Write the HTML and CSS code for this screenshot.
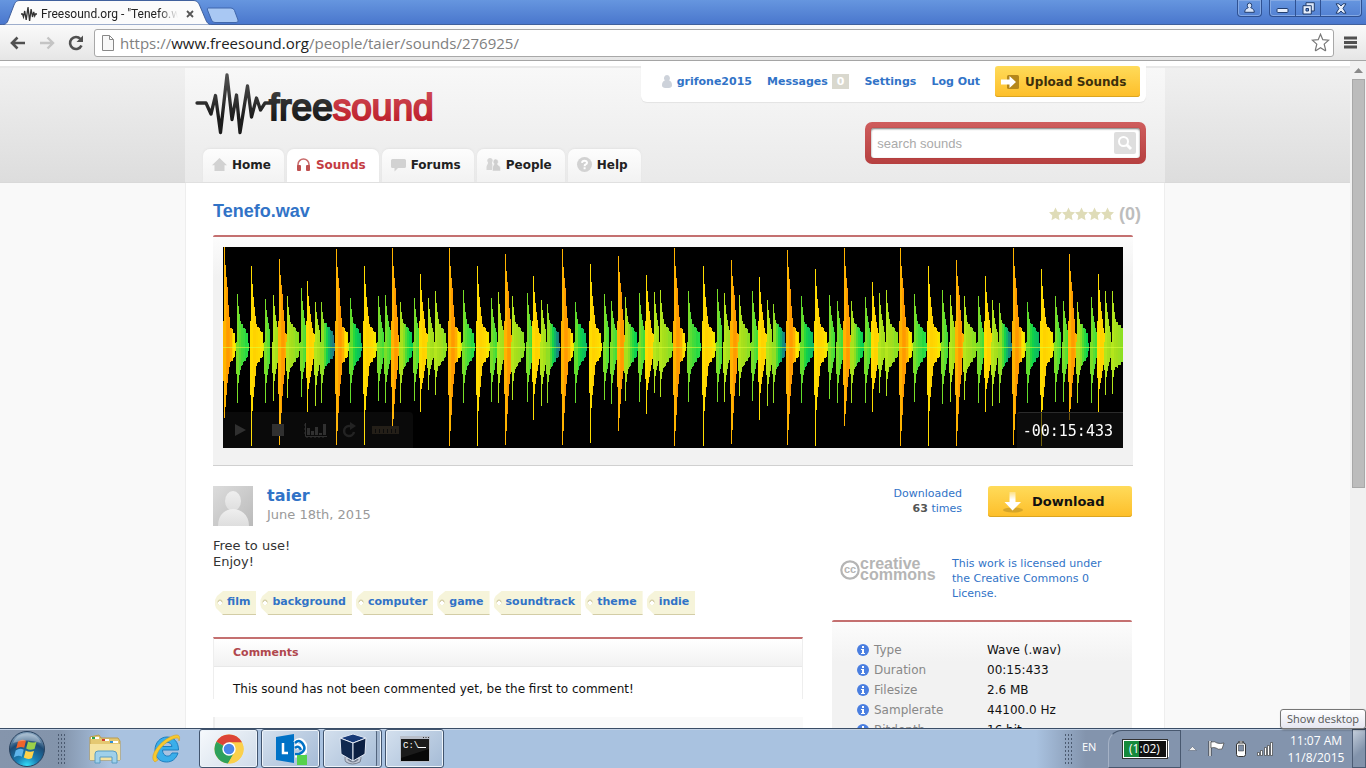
FILE: index.html
```html
<!DOCTYPE html>
<html lang="en">
<head>
<meta charset="utf-8">
<title>Freesound.org - "Tenefo.wav" by taier</title>
<link rel="stylesheet" href="styles.css">
</head>
<body>
<div class="desktop">

  <div class="titlebar">
    <div class="tab-strip">
      <div class="browser-tab">
        <svg class="tab-shape" viewBox="0 0 214 25" preserveAspectRatio="none" aria-hidden="true"><path d="M0 25C7 25 7.500 22 9 18L14 5C15.500 1.500 17 .5 20 .5H193C196 .5 198 1.500 199.500 5L205 18C207 23 208 25 214 25Z" fill="#fbfbfb" stroke="#40609c"/></svg>
        <svg class="tab-icon" width="16" height="16" viewBox="0 0 16 16" aria-hidden="true"><path d="M0 8h1.500l1 3 1.200-6 1.500 9L7 1l1.600 14 1.500-12 1.400 8 1.200-5 1 4 .8-2H16" fill="none" stroke="#333" stroke-width="1.300"/></svg>
        <span class="tab-title">Freesound.org - "Tenefo.wav"</span>
        <button class="tab-close" aria-label="Close tab"><svg width="8" height="8" viewBox="0 0 8 8"><path d="M1 1l6 6M7 1L1 7" stroke="#555" stroke-width="1.800"/></svg></button>
      </div>
      <button class="new-tab" aria-label="New tab"><svg width="33" height="17" viewBox="0 0 33 17"><path d="M2 1H25Q27.500 1 28.500 3.500L32 13Q33 15.500 30 15.500H9Q6.500 15.500 5.500 13L1.500 3Q1 1 2 1Z" fill="#a9c8f3" stroke="#4067ac"/></svg></button>
    </div>
    <div class="window-buttons">
      <button class="profile" aria-label="Profile"><svg width="11" height="12" viewBox="0 0 11 12"><path d="M5.500 1a2.300 2.300 0 0 1 2.200 2.500c0 1-.4 1.800-1 2.200C9 6.500 10.300 8 10.300 10.300H.7C.7 8 2 6.500 4.300 5.700c-.6-.4-1-1.200-1-2.200A2.300 2.300 0 0 1 5.500 1z" fill="#dbe6f8" stroke="#223e6e"/></svg></button>
      <div class="window-group">
        <button aria-label="Minimize"><svg width="13" height="12" viewBox="0 0 13 12"><rect x="1" y="6.500" width="11" height="4" rx="1" fill="#e6eefb" stroke="#223e6e"/></svg></button>
        <button aria-label="Restore"><svg width="13" height="13" viewBox="0 0 13 13"><path d="M4 .7h8.300V9H4z" fill="#dbe6f8" stroke="#223e6e"/><path d="M1 3.700h8.300V12H1z" fill="#e6eefb" stroke="#223e6e"/><path d="M4 6.500h2.500V9H4z" fill="#5d8ad4" stroke="#223e6e"/></svg></button>
        <button class="wide" aria-label="Close"><svg width="12" height="11" viewBox="0 0 12 11"><path d="M1 .8h3L6 3 8 .8h3L8 5.400l3 4.800H8L6 8l-2 2.200H1l3-4.800z" fill="#e6eefb" stroke="#223e6e"/></svg></button>
      </div>
    </div>
  </div>

  <div class="toolbar">
    <button aria-label="Back"><svg width="16" height="14" viewBox="0 0 16 14"><path d="M15 7H2M7.500 1.500L2 7l5.500 5.500" fill="none" stroke="#505050" stroke-width="2.600"/></svg></button>
    <button aria-label="Forward"><svg width="16" height="14" viewBox="0 0 16 14"><path d="M1 7h13M8.500 1.500L14 7l-5.500 5.500" fill="none" stroke="#c4c4c4" stroke-width="2.400"/></svg></button>
    <button aria-label="Reload"><svg width="16" height="16" viewBox="0 0 16 16"><path d="M12.500 4A6 6 0 1 0 13.500 10.500" fill="none" stroke="#505050" stroke-width="2.600"/><path d="M15 .5V7H8.500z" fill="#505050"/></svg></button>
    <form class="omnibox">
      <svg width="12" height="16" viewBox="0 0 12 16" aria-hidden="true"><path d="M.5.500h7l4 4v11H.5zM7.500.5v4h4" fill="#f8f8f8" stroke="#888"/></svg>
      <a class="address" href="#">https://<b>www.freesound.org</b>/people/taier/sounds/276925/</a>
      <button type="button" aria-label="Bookmark"><svg width="19" height="19" viewBox="0 0 19 19"><path d="M9.500 1.200l2.300 5.500 5.900.5-4.500 3.900 1.400 5.800c.1.700-.2.900-.7.600L9.500 14.700l-4.400 2.800c-.5.300-.8.100-.7-.6l1.400-5.800L1.300 7.200l5.900-.5z" fill="#fff" stroke="#777" stroke-width="1.200"/></svg></button>
    </form>
    <button aria-label="Menu"><svg width="13" height="13" viewBox="0 0 13 13"><path d="M0 2h13M0 6.500h13M0 11h13" stroke="#505050" stroke-width="2.800"/></svg></button>
  </div>

  <div class="viewport">
    <div class="page">
      <header class="page-head">
        <div class="wrap head-inner">
          <div class="head-left">
            <a class="logo" href="#" aria-label="freesound">
              <svg width="242" height="64" viewBox="0 0 242 64">
                <defs>
                  <linearGradient id="ink" x1="0" y1="0" x2="0" y2="64" gradientUnits="userSpaceOnUse"><stop offset="0" stop-color="#555"/><stop offset=".7" stop-color="#1c1c1c"/></linearGradient>
                  <linearGradient id="red" x1="0" y1="18" x2="0" y2="50" gradientUnits="userSpaceOnUse"><stop offset="0" stop-color="#cf4a55"/><stop offset="1" stop-color="#bd1f2b"/></linearGradient>
                </defs>
                <path d="M2 31H11L16 42L20.500 23.500L25.500 60.500L32 3L37 47.500L41.500 23L45 60.500L52.500 14L56.500 45L61.500 26L65.500 38L70 31H80" fill="none" stroke="url(#ink)" stroke-width="3.300" stroke-linejoin="round" stroke-linecap="round"/>
                <text class="logo-text" x="74" y="48"><tspan fill="url(#ink)" stroke="url(#ink)">free</tspan><tspan fill="url(#red)" stroke="url(#red)">sound</tspan></text>
              </svg>
            </a>
            <nav class="tabs">
              <a href="#"><svg width="15" height="15" viewBox="0 0 15 15"><path d="M7.500 1L15 8.300H12.500V14H2.500V8.300H0z" fill="#d2d2d2"/></svg>Home</a>
              <a class="active" href="#"><svg width="15" height="15" viewBox="0 0 15 15"><path d="M2 12V7.500a5.500 5.500 0 0 1 11 0V12" fill="none" stroke="#c86a6a" stroke-width="1.500"/><rect x="1" y="8" width="4" height="6" rx="1" fill="#bf5050"/><rect x="10" y="8" width="4" height="6" rx="1" fill="#bf5050"/></svg>Sounds</a>
              <a href="#"><svg width="15" height="15" viewBox="0 0 15 15"><path d="M1.500 2h12Q15 2 15 3.500v6Q15 11 13.500 11H7l-3.500 3.500V11h-2Q0 11 0 9.500v-6Q0 2 1.500 2z" fill="#d2d2d2"/></svg>Forums</a>
              <a href="#"><svg width="15" height="15" viewBox="0 0 15 15"><path d="M4 1a2.500 2.700 0 0 1 2 4.600c-.3 1 .5 1.500.5 2.400L6 13H.5V10C.5 8 2 8 2 5.600A2.700 2.700 0 0 1 4 1z" fill="#d6d6d6"/><path d="M9.500 2a2.700 2.800 0 0 1 2 4.800c0 2 3 1.500 3 4.500v2.700H6.500v-2.700c0-3 1.500-2.500 1.500-4.500A2.800 2.800 0 0 1 9.500 2z" fill="#cfcfcf" stroke="#f6f6f6" stroke-width=".5"/></svg>People</a>
              <a href="#"><svg width="15" height="15" viewBox="0 0 15 15"><circle cx="7.500" cy="7.500" r="7.500" fill="#d2d2d2"/><path d="M5 5.800Q5.200 3.700 7.500 3.700T10 5.700Q10 6.700 8.600 7.500 7.600 8 7.600 9.200M7.600 10.300v2" fill="none" stroke="#fff" stroke-width="2"/></svg>Help</a>
            </nav>
          </div>
          <div class="head-right">
            <div class="user-bar">
              <a href="#"><svg width="12" height="15" viewBox="0 0 12 15"><path d="M6 1a3 3.300 0 0 1 2.200 5.500C10.500 7.500 11 9 11 11.500 11 13.500 9 14 6 14s-5-.5-5-2.500C1 9 1.500 7.500 3.800 6.500A3.300 3.300 0 0 1 6 1z" fill="#cdd2da"/></svg>grifone2015</a>
              <a class="messages" href="#">Messages <span class="count">0</span></a>
              <a href="#">Settings</a>
              <a href="#">Log Out</a>
              <button class="gold upload"><svg width="20" height="16" viewBox="0 0 20 16"><rect x="7" y="1" width="12" height="14" rx="1.500" fill="#b5871b"/><path d="M1 5.500H9.500V2L16 8l-6.500 6V10.500H1z" fill="#fff"/></svg>Upload Sounds</button>
            </div>
            <form class="search">
              <input type="search" placeholder="search sounds" aria-label="search sounds">
              <button type="button" aria-label="Search"><svg width="22" height="22" viewBox="0 0 22 22"><rect width="22" height="22" rx="2" fill="#dedede"/><circle cx="9.500" cy="9.500" r="4.500" fill="none" stroke="#fff" stroke-width="2"/><path d="M13 13l4 4" stroke="#fff" stroke-width="3"/></svg></button>
            </form>
          </div>
        </div>
      </header>

      <main class="wrap content">
        <div class="title-row">
          <h1><a href="#">Tenefo.wav</a></h1>
          <div class="rating">
            <svg width="66" height="14" viewBox="0 0 66 14" role="img" aria-label="0 of 5 stars">
              <defs><path id="star" d="M6.500.5l2 4.200 4.500.6-3.300 3.200.8 4.700-4-2.300-4 2.300.8-4.700L0 5.300l4.500-.6z" fill="#dfdcb8"/></defs>
              <use href="#star"/><use href="#star" x="13"/><use href="#star" x="26"/><use href="#star" x="39"/><use href="#star" x="52"/>
            </svg>
            <span>(0)</span>
          </div>
        </div>

        <section class="player">
          <div class="screen">
            <canvas id="wave" width="900" height="201"></canvas>
            <div class="controls">
              <button aria-label="Play"><svg width="23" height="16" viewBox="0 0 23 16"><path d="M7 2l11 6-11 6z" fill="#303030"/></svg></button>
              <button aria-label="Stop"><svg width="23" height="16" viewBox="0 0 23 16"><path d="M6 2h12v12H6z" fill="#303030"/></svg></button>
              <button aria-label="Spectrogram"><svg width="23" height="16" viewBox="0 0 23 16"><path d="M1.500 1v13.500H23M3 15v1M7 15v1M11 15v1M15 15v1M19 15v1M0 3h1M0 7h1M0 11h1" fill="none" stroke="#303030"/><path d="M3 6h3v7H3zM7 9h3v4H7zM11 5h3v8h-3zM15 11h3v2h-3zM19 2h3v11h-3z" fill="#303030"/></svg></button>
              <button aria-label="Loop"><svg width="16" height="16" viewBox="0 0 16 16"><path d="M9 4H8a5 5 0 1 0 5 6" fill="none" stroke="#232323" stroke-width="2.500"/><path d="M9 0l6 4-6 4z" fill="#232323"/></svg></button>
              <button aria-label="Measure"><svg width="27" height="8" viewBox="0 0 27 8"><path d="M0 0h27v8H0z" fill="#241f18"/><path d="M3.500 3v4M7.500 3v4M11.500 3v4M15.500 3v4M19.500 3v4M23.500 3v4" stroke="#0c0c0c"/></svg></button>
            </div>
            <div class="timer">-00:15:433</div>
          </div>
        </section>

        <div class="columns">
          <div class="main-col">
            <div class="author">
              <svg width="40" height="40" viewBox="0 0 40 40" role="img" aria-label="taier avatar"><defs><linearGradient id="av" x1="0" y1="0" x2="1" y2="1"><stop offset="0" stop-color="#dcdcdc"/><stop offset="1" stop-color="#bababa"/></linearGradient><linearGradient id="bust" x1="0" y1="0" x2="0" y2="1"><stop offset="0" stop-color="#efefef"/><stop offset="1" stop-color="#dedede"/></linearGradient></defs><path d="M0 0h40v40H0z" fill="url(#av)"/><ellipse cx="20" cy="15" rx="8" ry="10" fill="url(#bust)"/><path d="M5 40C5 28 13 23 20 23s16 5 16 17z" fill="url(#bust)"/></svg>
              <div><a class="name" href="#">taier</a><span class="date">June 18th, 2015</span></div>
            </div>
            <p class="description">Free to use!<br>Enjoy!</p>
            <div class="tags">
              <a href="#">film</a><a href="#">background</a><a href="#">computer</a><a href="#">game</a><a href="#">soundtrack</a><a href="#">theme</a><a href="#">indie</a>
            </div>
            <section class="comments">
              <h2>Comments</h2>
              <p>This sound has not been commented yet, be the first to comment!</p>
            </section>
            <div class="comment-form"></div>
          </div>

          <aside class="side-col">
            <div class="download-row">
              <a href="#">Downloaded<br><b>63</b> times</a>
              <button class="gold download"><svg width="22" height="22" viewBox="0 0 22 22"><defs><linearGradient id="arrow" x1="0" y1="0" x2="0" y2="1"><stop offset="0" stop-color="#fff" stop-opacity=".3"/><stop offset=".4" stop-color="#fff"/></linearGradient></defs><ellipse cx="11" cy="19" rx="10" ry="2.500" fill="#b48c22" opacity=".55"/><path d="M7.500 1h6v10H19l-8.500 8.500L2.500 11h5z" fill="url(#arrow)"/></svg>Download</button>
            </div>
            <div class="license">
              <svg width="97" height="26" viewBox="0 0 97 26" role="img" aria-label="creative commons"><circle cx="10" cy="14" r="8.700" fill="none" stroke="#b5b5b5" stroke-width="2.200"/><text class="cc-mark" x="4" y="17">cc</text><text class="cc-text" x="20" y="13">creative</text><text class="cc-text" x="20" y="24">commons</text></svg>
              <a href="#">This work is licensed under the Creative Commons 0 License.</a>
            </div>
            <section class="facts">
              <table>
                <tr><th><a href="#" class="info" aria-label="About type"><svg width="12" height="12"><use href="#info"/></svg></a>Type</th><td>Wave (.wav)</td></tr>
                <tr><th><a href="#" class="info" aria-label="About duration"><svg width="12" height="12"><use href="#info"/></svg></a>Duration</th><td>00:15:433</td></tr>
                <tr><th><a href="#" class="info" aria-label="About filesize"><svg width="12" height="12"><use href="#info"/></svg></a>Filesize</th><td>2.6 MB</td></tr>
                <tr><th><a href="#" class="info" aria-label="About samplerate"><svg width="12" height="12"><use href="#info"/></svg></a>Samplerate</th><td>44100.0 Hz</td></tr>
                <tr><th><a href="#" class="info" aria-label="About bitdepth"><svg width="12" height="12"><use href="#info"/></svg></a>Bitdepth</th><td>16 bit</td></tr>
              </table>
              <svg width="0" height="0" aria-hidden="true"><defs><g id="info"><circle cx="6" cy="6" r="6" fill="#4a7ee0"/><path d="M5 2h2v2H5zM4 5h3v4h1v1H4V9h1V6H4z" fill="#fff"/></g></defs></svg>
            </section>
          </aside>
        </div>
      </main>
    </div>
    <div class="scrollbar"><svg width="9" height="5" viewBox="0 0 9 5"><path d="M4.500 0L9 5H0z" fill="#8a8a8a"/></svg><div class="thumb"></div></div>
  </div>

  <footer class="taskbar">
    <button class="start" aria-label="Start">
      <svg width="38" height="38" viewBox="0 0 38 38"><defs><radialGradient id="orb" cx=".5" cy="1" r=".9"><stop offset="0" stop-color="#35e6ff"/><stop offset=".35" stop-color="#1a7fb4"/><stop offset=".75" stop-color="#1d4b75"/><stop offset="1" stop-color="#7d9cb8"/></radialGradient></defs><circle cx="19" cy="19" r="17.500" fill="url(#orb)" stroke="#29425f"/><path d="M10 11.500q4-3 8-.7l-1.800 7q-4-2-8 .8z" fill="#f0652c"/><path d="M20 11.500q4 2 8.500.2l-2 7.200q-4.500 1.800-8.300-.4z" fill="#9bd04a"/><path d="M7.700 20.500q4-2.800 8-.8l-1.900 7q-4-2-8 .8z" fill="#5fb4ea"/><path d="M17.700 20.500q4 2.200 8.300.4l-2 7.200q-4 2-8.200-.5z" fill="#ffd24a"/><path d="M5 13Q9 3 19 3t14 10Q19 8 5 13z" fill="#fff" opacity=".3"/></svg>
    </button>
    <span class="grip"></span>
    <div class="apps">
      <button class="app" aria-label="Explorer"><svg width="34" height="32" viewBox="0 0 34 32"><path d="M2 4l9-2 2 3h17l2 3v19H2z" fill="#e4c872" stroke="#b99b4e"/><path d="M3 5h8M14 7h7M22 9h8" stroke="#fff" stroke-width="2"/><path d="M4 5h3" stroke="#2fa24a" stroke-width="2"/><path d="M14 7h3" stroke="#d23c2a" stroke-width="2"/><path d="M22 9h3" stroke="#2d8fd6" stroke-width="2"/><path d="M2 11h30v16H2z" fill="#f5e3a0"/><path d="M7 30V21q0-3 3-3h15q4 0 4 4v8h-5v-6H12v6z" fill="#9fd0ea" stroke="#5a9cc2"/></svg></button>
      <button class="app" aria-label="Internet Explorer"><svg width="32" height="32" viewBox="0 0 32 32"><path d="M16 4c7 0 11.500 5 11.500 13H11.500c0 7 7.500 8 9.500 3h6c-2 6-6 9-11.500 9C8.500 29 4 24 4 17S9 4 16 4zm-4.500 9.500h9.500c-.8-5.500-8.500-5.500-9.500 0z" fill="#3aaeea" stroke="#1d7fc0"/><path d="M4 29C-3 24 8 9 19 4c8-4 11-2 9 4 0-4-3-4-9-.5C10 12 2 24 7 27z" fill="#f7c92f" stroke="#d39a18" stroke-width=".5"/></svg></button>
      <button class="app open" aria-label="Chrome"><svg width="30" height="30" viewBox="0 0 30 30"><circle cx="15" cy="15" r="14.500" fill="#fbd04b"/><path d="M15 15L2.400 7.800A14.500 14.500 0 0 1 27.600 7.800L28 8.500H15z" fill="#dc4437"/><path d="M15 15L2.400 7.800A14.500 14.500 0 0 0 14 29.500L20.500 18z" fill="#2da15c"/><path d="M15 8.500h13A14.500 14.500 0 0 1 14 29.500L20.600 18.300z" fill="#fbd04b"/><circle cx="15" cy="15" r="6.700" fill="#fff"/><circle cx="15" cy="15" r="5.300" fill="#4a86e8"/></svg></button>
      <button class="app open dim" aria-label="Lync"><svg width="32" height="32" viewBox="0 0 32 32"><path d="M1 4l18-3v29L1 27z" fill="#0072c6"/><path d="M8 10v10h5" fill="none" stroke="#fff" stroke-width="2.500"/><path d="M20 10q6-6 10 3 2 6-5 9h-5M20 14q7-2 8 3" fill="none" stroke="#fff" stroke-width="5"/><path d="M20 10q5-5 9 3 2 5-5 8h-4M20 15q4-3 6 2" fill="none" stroke="#0072c6" stroke-width="2.500"/><path d="M22 22h10v10H22z" fill="#56d24c"/></svg></button>
      <button class="app open dim stack" aria-label="VirtualBox"><svg width="32" height="32" viewBox="0 0 32 32"><path d="M9 20q-2 7 0 9 6 4 14 0 2-3 0-9" fill="#c4cad6" stroke="#777f90"/><path d="M11 26q5 5 10 0" fill="none" stroke="#777f90" stroke-width="2"/><path d="M3 5l13-4 13 4-13 5z" fill="#173a78" stroke="#e1e8f4"/><path d="M3 5l13 5v18L4 21z" fill="#10284f" stroke="#e1e8f4"/><path d="M29 5l-13 5v18l12-7z" fill="#0b1f42" stroke="#e1e8f4"/></svg></button>
      <button class="app open dim" aria-label="Command prompt"><svg width="30" height="26" viewBox="0 0 30 26"><path d="M0 0h30v26H0z" fill="#b8bec9"/><path d="M1 3h28v22H1z" fill="#080808"/><path d="M23 1.500h1M25.500 1.500h1M28 1.500h1" stroke="#333"/><path d="M15 3h14v10L1 22V3z" fill="#fff" opacity=".08"/><text class="prompt" x="3" y="12">C:\</text><path d="M18 11.500h8" stroke="#fff"/></svg></button>
    </div>
    <div class="tray">
      <span class="grip"></span>
      <span class="language">EN</span>
      <div class="battery-panel"><div class="battery">(1:02)</div></div>
      <div class="tray-icons">
        <svg width="9" height="5" viewBox="0 0 9 5"><path d="M4.500.5L8.500 4.500H.5z" fill="#eee" stroke="#4a5568" stroke-width=".5"/></svg>
        <svg width="17" height="17" viewBox="0 0 17 17"><path d="M2 1v15" stroke="#333" stroke-width="3"/><path d="M2 1v15" stroke="#fff" stroke-width="1.500"/><path d="M3 2q4-1 6 1 3 1 7 0l-2 6q-4 1-6-1-2-1-5 0z" fill="#fff" stroke="#444" stroke-width=".7"/></svg>
        <svg width="10" height="16" viewBox="0 0 10 16"><rect x="3" y="0" width="4" height="3" fill="#fff" stroke="#333"/><rect x=".5" y="2" width="9" height="13.500" rx="2" fill="#fff" stroke="#333"/><path d="M2.500 4h5v6h-5z" fill="#8090a8" stroke="#333" stroke-width=".5"/></svg>
        <svg width="17" height="14" viewBox="0 0 17 14"><path d="M.5 10.500h2v3h-2zM3.500 8.500h2v5h-2zM7.500 5.500h2v8h-2zM10.500 3.500h2v10h-2zM13.500.5h2v13h-2z" fill="#fff" stroke="#444" stroke-width=".7"/></svg>
      </div>
      <time class="clock">11:07 AM<br>11/8/2015</time>
      <button class="show-desktop" aria-label="Show desktop"></button>
    </div>
    <div class="tooltip" role="tooltip">Show desktop</div>
  </footer>
</div>
<script src="wave.js"></script>
</body>
</html>
```
FILE: styles.css
```css
* { box-sizing: border-box; }
body {
  margin: 0;
  font-family: "DejaVu Sans", Verdana, sans-serif;
  font-size: 12px;
  color: #222;
}
button {
  padding: 0;
  border: 0;
  background: none;
  font: inherit;
  color: inherit;
}
a { color: #3173c7; text-decoration: none; }
h1, h2, p { margin: 0; }
svg { display: block; flex: none; }

.desktop {
  height: 100vh;
  display: flex;
  flex-direction: column;
  overflow: hidden;
}

/* Browser frame */
.titlebar {
  flex: none;
  height: 25px;
  display: flex;
  justify-content: space-between;
  align-items: flex-start;
  background: linear-gradient(#6696df, #4a77cd);
  border-bottom: 1px solid #40609c;
  font-family: "Open Sans", "Noto Sans", sans-serif;
}
.tab-strip { display: flex; }
.browser-tab {
  position: relative;
  width: 214px;
  height: 25px;
  padding: 2px 20px 0 21px;
  display: flex;
  align-items: center;
}
.tab-shape { position: absolute; left: 0; top: 0; width: 100%; height: 100%; }
.tab-icon, .tab-title, .tab-close { position: relative; }
.tab-title {
  flex: 1;
  min-width: 0;
  margin-left: 4px;
  overflow: hidden;
  white-space: nowrap;
  font-family: Roboto, sans-serif;
  font-size: 12px;
  line-height: 18px;
  -webkit-mask-image: linear-gradient(90deg, #000 86%, transparent);
  mask-image: linear-gradient(90deg, #000 86%, transparent);
}
.tab-close { margin-left: 8px; }
.new-tab { margin-top: 5px; margin-left: -8px; position: relative; }
.window-buttons { display: flex; gap: 7px; padding-right: 4px; }
.profile, .window-group {
  height: 17px;
  border: 1px solid #2f5192;
  border-top: 0;
  border-radius: 0 0 4px 4px;
  box-shadow: inset 0 0 0 1px #84a9e4;
}
.profile { width: 25px; display: grid; place-items: center; }
.window-group { display: flex; }
.window-group button { width: 25px; display: grid; place-items: center; }
.window-group button + button { border-left: 1px solid #2f5192; }
.window-group .wide { width: 41px; }

.toolbar {
  flex: none;
  height: 36px;
  display: flex;
  align-items: center;
  gap: 13px;
  padding: 0 9px 0 10px;
  background: linear-gradient(#fafafa, #e6e6e6);
  border-bottom: 1px solid #a5a5a5;
}
.omnibox {
  flex: 1;
  height: 28px;
  display: flex;
  align-items: center;
  gap: 6px;
  margin: 0 -3px;
  padding: 0 3px 0 7px;
  border: 1px solid #a8a8a8;
  border-radius: 3px;
  background: #fff;
}
.address {
  flex: 1;
  font-family: "Open Sans", "Noto Sans", sans-serif;
  font-size: 15px;
  color: #808080;
}
.address b { font-weight: 400; color: #222; }

.viewport { flex: 1; min-height: 0; display: flex; }
.page { flex: 1; overflow: hidden; background: #f9f9f9; }
.wrap { width: 100%; max-width: 980px; margin: 0 auto; }

/* Site header */
.page-head {
  height: 122px;
  border-bottom: 1px solid #d9d9d9;
  background: linear-gradient(#e8e8e8 0 2px, #f0f0f0 2px, #dcdcdc) 0 5px no-repeat #fff;
}
.head-inner {
  height: 122px;
  display: flex;
  justify-content: space-between;
  padding: 0 20px 0 10px;
  border-bottom: 1px solid #e0e0e0;
  background: linear-gradient(#e8e8e8 0 2px, #f8f8f8 2px, #e9e9e9) 0 5px no-repeat;
}
.head-left { display: flex; flex-direction: column; justify-content: space-between; padding-top: 11px; }
.logo-text { font-family: "Liberation Sans", Arial, sans-serif; font-size: 37px; stroke-width: 2px; }
.tabs { display: flex; gap: 3px; padding-left: 8px; }
.tabs a {
  height: 33px;
  display: flex;
  align-items: center;
  gap: 5px;
  padding: 0 13px 2px 9px;
  border-radius: 7px 7px 0 0;
  background: linear-gradient(#fdfdfd, #f2f2f2);
  box-shadow: 0 -1px 2px #e3e3e3;
  font-size: 12px;
  font-weight: 700;
  color: #222;
}
.tabs .active { background: #fff; color: #c43c43; }
.head-right { display: flex; flex-direction: column; align-items: flex-end; gap: 20px; }
.user-bar {
  display: flex;
  align-items: center;
  gap: 15px;
  height: 41px;
  padding: 0 6px 0 20px;
  border-radius: 0 0 6px 6px;
  background: #fff;
  box-shadow: 0 1px 1px #e3e3e3;
  font-size: 11px;
  font-weight: 700;
  white-space: nowrap;
}
.user-bar a { display: flex; align-items: center; gap: 4px; }
.messages .count {
  padding: 0 5px;
  background: #d9d8ce;
  color: #fff;
  line-height: 15px;
}
.gold {
  height: 31px;
  display: flex;
  align-items: center;
  border-radius: 3px;
  background: linear-gradient(#ffdb5a, #fdbe29);
  box-shadow: inset 0 -1px #dba521;
  font-weight: 700;
}
.upload { gap: 5px; padding: 0 14px 0 5px; font-size: 12px; color: #3d2f0b; }
.search {
  width: 281px;
  height: 42px;
  display: flex;
  align-items: center;
  padding: 6px;
  border-radius: 7px;
  background: linear-gradient(#cf5d5d, #b64040);
}
.search input {
  width: 100%;
  height: 30px;
  padding: 0 34px 0 6px;
  border: 0;
  border-radius: 3px;
  background: #fff;
  box-shadow: inset 0 1px 2px #777, 0 0 1px #822;
  font: 13px "Liberation Sans", Arial, sans-serif;
}
.search input::placeholder { color: #aaa; opacity: 1; }
.search button { margin-left: -26px; margin-right: 4px; }

/* Sound page */
.content {
  min-height: 100%;
  padding: 17px 24px 0 28px;
  background: #fff;
  box-shadow: inset 1px 0 #eee, inset -1px 0 #eee;
}
.title-row { display: flex; justify-content: space-between; height: 35px; }
h1, .rating { font: 700 18px/22px "Liberation Sans", Arial, sans-serif; }
.rating { display: flex; align-items: center; gap: 4px; height: 28px; color: #bdbdbd; }
.player {
  max-width: 920px;
  padding: 10px 10px 17px;
  border-top: 2px solid #c47070;
  border-bottom: 1px solid #d0d0d0;
  border-radius: 2px 2px 0 0;
  background: linear-gradient(#fcfcfc, #f2f2f2 40px);
}
.screen { position: relative; background: #000; }
.screen canvas { display: block; width: 100%; }
.controls {
  position: absolute;
  left: 0;
  bottom: 0;
  width: 190px;
  height: 36px;
  display: flex;
  align-items: center;
  justify-content: space-between;
  padding: 0 14px 0 5px;
  border-radius: 0 4px 0 0;
  background: rgba(255, 255, 255, .04);
}
.timer {
  position: absolute;
  right: 0;
  bottom: 0;
  height: 36px;
  padding: 0 10px 0 6px;
  border-top: 1px solid #2b2b2b;
  border-radius: 3px 0 0 0;
  background: rgba(19, 19, 19, .6);
  font: 15px/37px "DejaVu Sans Mono", monospace;
  color: #fff;
}
.columns {
  display: grid;
  grid-template-columns: minmax(0, 590px) 300px;
  gap: 29px;
  padding-top: 20px;
}
.author { display: flex; gap: 14px; }
.author .name, .author .date { display: block; }
.name { font-size: 16px; font-weight: 700; line-height: 20px; }
.date { font-size: 13px; line-height: 18px; color: #999; }
.description { margin-top: 12px; font-size: 13px; line-height: 16px; color: #333; }
.tags { display: flex; gap: 4px; margin: 21px 0 22px 2px; }
.tags a {
  height: 24px;
  padding: 0 6px 0 12px;
  font-size: 11px;
  font-weight: 700;
  line-height: 22px;
  background:
    radial-gradient(circle at 5px 12px, #fff 0 2px, transparent 2px),
    radial-gradient(circle at 5px 11px, #d6d0ac 0 2px, transparent 3px),
    linear-gradient(#f6f4da 0 23px, #d3cda6 23px);
  clip-path: polygon(8px 0, 100% 0, 100% 100%, 8px 100%, 1px 17px, 0 14px, 0 9px, 2px 5px);
}
.comments {
  border: 1px solid #eee;
  border-top: 2px solid #c47070;
  border-bottom: 0;
}
.comments h2 {
  padding-left: 19px;
  border-bottom: 1px solid #e8e8e8;
  background: linear-gradient(#fff, #f2f2f2);
  font-size: 11px;
  line-height: 27px;
  color: #b0474d;
}
.comments p { padding: 14px 19px 2px; line-height: 16px; color: #111; }
.comment-form { height: 60px; margin-top: 18px; border-left: 2px solid #eee; background: #fafafa; }

.download-row {
  display: flex;
  justify-content: flex-end;
  gap: 26px;
  text-align: right;
  font-size: 11px;
  line-height: 15px;
}
.download-row b { color: #555; }
.download { width: 144px; gap: 8px; padding-left: 14px; font-size: 13px; color: #111; }
.license {
  display: flex;
  gap: 15px;
  margin-top: 39px;
  padding-left: 8px;
  font-size: 11px;
  line-height: 15px;
}
.license a { width: 170px; }
.cc-text { font: 700 16px "Liberation Sans", Arial, sans-serif; fill: #b5b5b5; }
.cc-mark { font: 700 11px "Liberation Sans", Arial, sans-serif; fill: #b5b5b5; }
.facts {
  margin-top: 19px;
  padding: 18px 25px 40px;
  border-top: 2px solid #c47070;
  border-radius: 2px;
  background: linear-gradient(#fcfcfc, #f2f2f2 40px);
}
.facts table { border-collapse: collapse; }
.facts th, .facts td { padding: 0; height: 20px; line-height: 20px; text-align: left; font-weight: 400; }
.facts th { width: 130px; display: flex; align-items: center; gap: 5px; color: #888; }
.facts td { color: #111; }

.scrollbar {
  flex: none;
  width: 16px;
  display: flex;
  flex-direction: column;
  align-items: center;
  gap: 6px;
  padding-top: 7px;
  background: #f1f1f1;
}
.thumb { width: 13px; height: 62%; border: 1px solid #a8a8a8; background: #bcbcbc; }

/* Taskbar */
.taskbar {
  position: relative;
  flex: none;
  height: 40px;
  display: flex;
  align-items: center;
  border-top: 1px solid #3a4d66;
  background: linear-gradient(90deg, #8595ac 0, #8394ab 60px, #a9c2e0 110px, #a9c2e0 calc(100% - 330px), #8394ad calc(100% - 280px));
  box-shadow: inset 0 1px #c3d2e6;
  font-family: "Open Sans", "Noto Sans", sans-serif;
  color: #fff;
}
.start { margin-left: 8px; }
.grip {
  width: 9px;
  height: 31px;
  margin: 0 9px 0 11px;
  background: radial-gradient(circle, #4b5a70 0 1px, transparent 1px) 0 0 / 3px 4px;
}
.apps { display: flex; gap: 3px; }
.app { width: 59px; height: 39px; display: grid; place-items: center; }
.app.open {
  border: 1px solid #41546e;
  border-radius: 3px;
  background: linear-gradient(135deg, #f6f9fc, #cfdbe9);
  box-shadow: inset 0 0 0 1px #eef4fa;
}
.app.dim { background: linear-gradient(135deg, #d4e0ee, #a5bbd6); }
.app.stack { box-shadow: inset 0 0 0 1px #eef4fa, inset -4px 0 #9fb3cc, inset -5px 0 #52647d; }
.prompt { font: 9px "Liberation Mono", monospace; fill: #fff; }
.tray { margin-left: auto; height: 39px; display: flex; align-items: center; }
.tray .grip { margin: 0 9px 0 0; }
.language { width: 26px; font-size: 11px; margin-bottom: 5px; }
.battery-panel {
  width: 73px;
  height: 38px;
  display: grid;
  place-items: center;
  border: 1px solid #48586f;
  border-left-color: #a5b2c6;
  border-radius: 14px 0 0 0;
}
.battery {
  width: 44px;
  height: 18px;
  border: 1px solid #fff;
  outline: 1px solid #333;
  box-shadow: 3px 0 0 -1px #fff;
  background: linear-gradient(90deg, #168a3c 36%, #111 36%);
  font-size: 12px;
  line-height: 16px;
  text-align: center;
}
.tray-icons { display: flex; align-items: center; gap: 11px; padding: 0 12px 0 7px; }
.clock { width: 60px; font-size: 12px; line-height: 17px; text-align: center; white-space: nowrap; }
.show-desktop {
  width: 14px;
  height: 39px;
  margin-left: 6px;
  border: 1px solid #4c5c74;
  background: linear-gradient(135deg, #c5cfdc, #8293ab 60%);
}
.tooltip {
  position: absolute;
  right: 0;
  bottom: 39px;
  padding: 0 6px;
  border: 1px solid #767676;
  border-radius: 3px;
  background: linear-gradient(#fff, #e5e6f0);
  box-shadow: 1px 1px 2px rgba(0, 0, 0, .4);
  font-size: 11px;
  line-height: 18px;
  color: #555;
}
```
FILE: wave.js
```js
// Each hit: x, height above the axis, height below it, length, colour kind.
const hits = [
  [1,100,71,12,'o'],[14,53,56,12,'g'],[28,81,99,13,'y'],[42,48,56,5,'g'],[50,52,54,6,'l'],
  [56,88,98,8,'o'],[64,51,51,13,'l'],[78,59,50,6,'g'],[84,66,65,8,'y'],[92,45,59,5,'l'],
  [98,45,56,14,'t'],[113,98,98,13,'o'],[127,49,56,12,'d'],[141,81,98,13,'y'],[155,51,54,6,'g'],
  [162,52,56,7,'g'],[169,99,84,7,'o'],[177,45,56,13,'m'],[191,49,54,6,'g'],[197,73,65,8,'y'],
  [205,49,43,6,'l'],[212,56,48,12,'l'],[226,99,99,13,'o'],[240,57,56,12,'g'],[254,81,99,13,'y'],
  [268,49,55,6,'g'],[275,55,56,7,'l'],[282,93,98,7,'o'],[289,51,53,13,'l'],[304,54,55,6,'g'],
  [310,71,73,8,'y'],[318,47,59,5,'l'],[324,43,56,13,'t'],[339,98,98,12,'o'],[352,45,56,12,'d'],
  [367,83,96,12,'y'],[381,53,53,5,'g'],[388,46,57,7,'g'],[395,91,84,7,'o'],[402,50,54,13,'m'],
  [416,54,55,7,'g'],[423,72,67,8,'y'],[431,55,46,5,'l'],[437,57,50,13,'l'],[451,99,99,12,'o'],
  [465,56,55,13,'g'],[480,81,99,13,'y'],[494,58,55,5,'g'],[501,54,55,7,'l'],[508,87,97,8,'o'],
  [516,52,49,12,'l'],[529,56,54,7,'g'],[536,70,73,8,'y'],[544,47,59,5,'l'],[550,43,56,13,'t'],
  [564,97,98,13,'o'],[578,51,56,13,'d'],[592,78,99,13,'y'],[606,52,52,6,'g'],[614,46,56,7,'g'],
  [621,99,79,7,'o'],[628,46,56,13,'m'],[642,50,56,6,'g'],[649,65,65,8,'y'],[656,54,46,6,'l'],
  [663,57,49,13,'l'],[677,99,99,13,'o'],[691,53,55,13,'g'],[705,81,99,13,'y'],[719,57,57,6,'g'],
  [727,52,55,6,'l'],[733,87,99,8,'o'],[741,51,53,13,'l'],[755,51,56,6,'g'],[762,71,65,8,'y'],
  [769,47,59,6,'l'],[776,44,56,13,'t'],[790,99,98,13,'o'],[804,45,56,13,'d'],[818,78,99,13,'y'],
  [832,51,55,6,'g'],[840,46,55,6,'g'],[846,93,73,8,'o'],[854,45,56,12,'m'],[868,50,56,6,'g'],
  [875,73,65,8,'y'],[882,56,48,6,'l'],[889,56,47,18,'l']
];
const ramps = {
  o: ['#ffb400', '#ff9f00', '#ff9a00', '#ffa000', '#ffb000', '#ffd200', '#ffe400', '#e8e800', '#cfe61c'],
  y: ['#ffdc00', '#ffd200', '#ffd200', '#ffd600', '#ffda00', '#ffe000', '#f4e800', '#dbe80c'],
  l: ['#b4e61c', '#a8e11c', '#a4de1c', '#9cdf20', '#8cdf24', '#8ce01c', '#78de28'],
  g: ['#78de28', '#5ade34', '#44dc38', '#3bdb40', '#28da40', '#28dc48', '#20d84c'],
  d: ['#60dd2c', '#28d83c', '#10d04c', '#0cc658', '#0cbf5c', '#0cb464'],
  m: ['#a8e11c', '#88df24', '#50dc34', '#28da40', '#10d44c', '#08cc54'],
  t: ['#90de24', '#50dc34', '#14d24c', '#10b468', '#14907a', '#207c80']
};
const decayUp = [1, .78, .62, .5, .38];
const decayDown = [1, .64, .5, .4, .3];
// Orange hits keep a wide, tall core.
const coreUp = [1, .82, .7, .6, .42, .3];
const coreDown = [1, .85, .68, .5, .38, .28];
const axis = 100;
const ctx = document.getElementById('wave').getContext('2d');

hits.forEach(([x, up, down, length, kind], n) => {
  const ramp = ramps[kind];
  const core = kind === 'o';
  for (let k = -1; k < length && x + k < 900; k++) {
    const i = Math.max(0, k);
    const t = i / length;
    const ripple = ((k * 7 + n * 3) % 3) - 1;
    const tail = 27 * (1 - .62 * Math.pow(t, 1.3)) + (k > 2 ? ripple : 0);
    let high = Math.max(up * ((core ? coreUp : decayUp)[i] || 0), tail);
    let low = Math.max(down * ((core ? coreDown : decayDown)[i] || 0), tail - 4);
    if (kind === 'y') low = Math.max(low, 48 - i * 6);
    if (k < 0) {
      high = core || kind === 'y' ? 26 : 5;
      low = down * .48;
    }
    if (k === length - 1 && length > 10 && x < 885) {
      high = 4;
      low = 4;
    }
    ctx.fillStyle = ramp[Math.min(ramp.length - 1, Math.floor(i / 13 * ramp.length))];
    ctx.fillRect(x + k, Math.round(axis - high), 1, Math.round(high + low));
  }
});

ctx.fillStyle = 'rgba(220, 255, 60, .6)';
ctx.fillRect(0, axis, 900, 1);
```
